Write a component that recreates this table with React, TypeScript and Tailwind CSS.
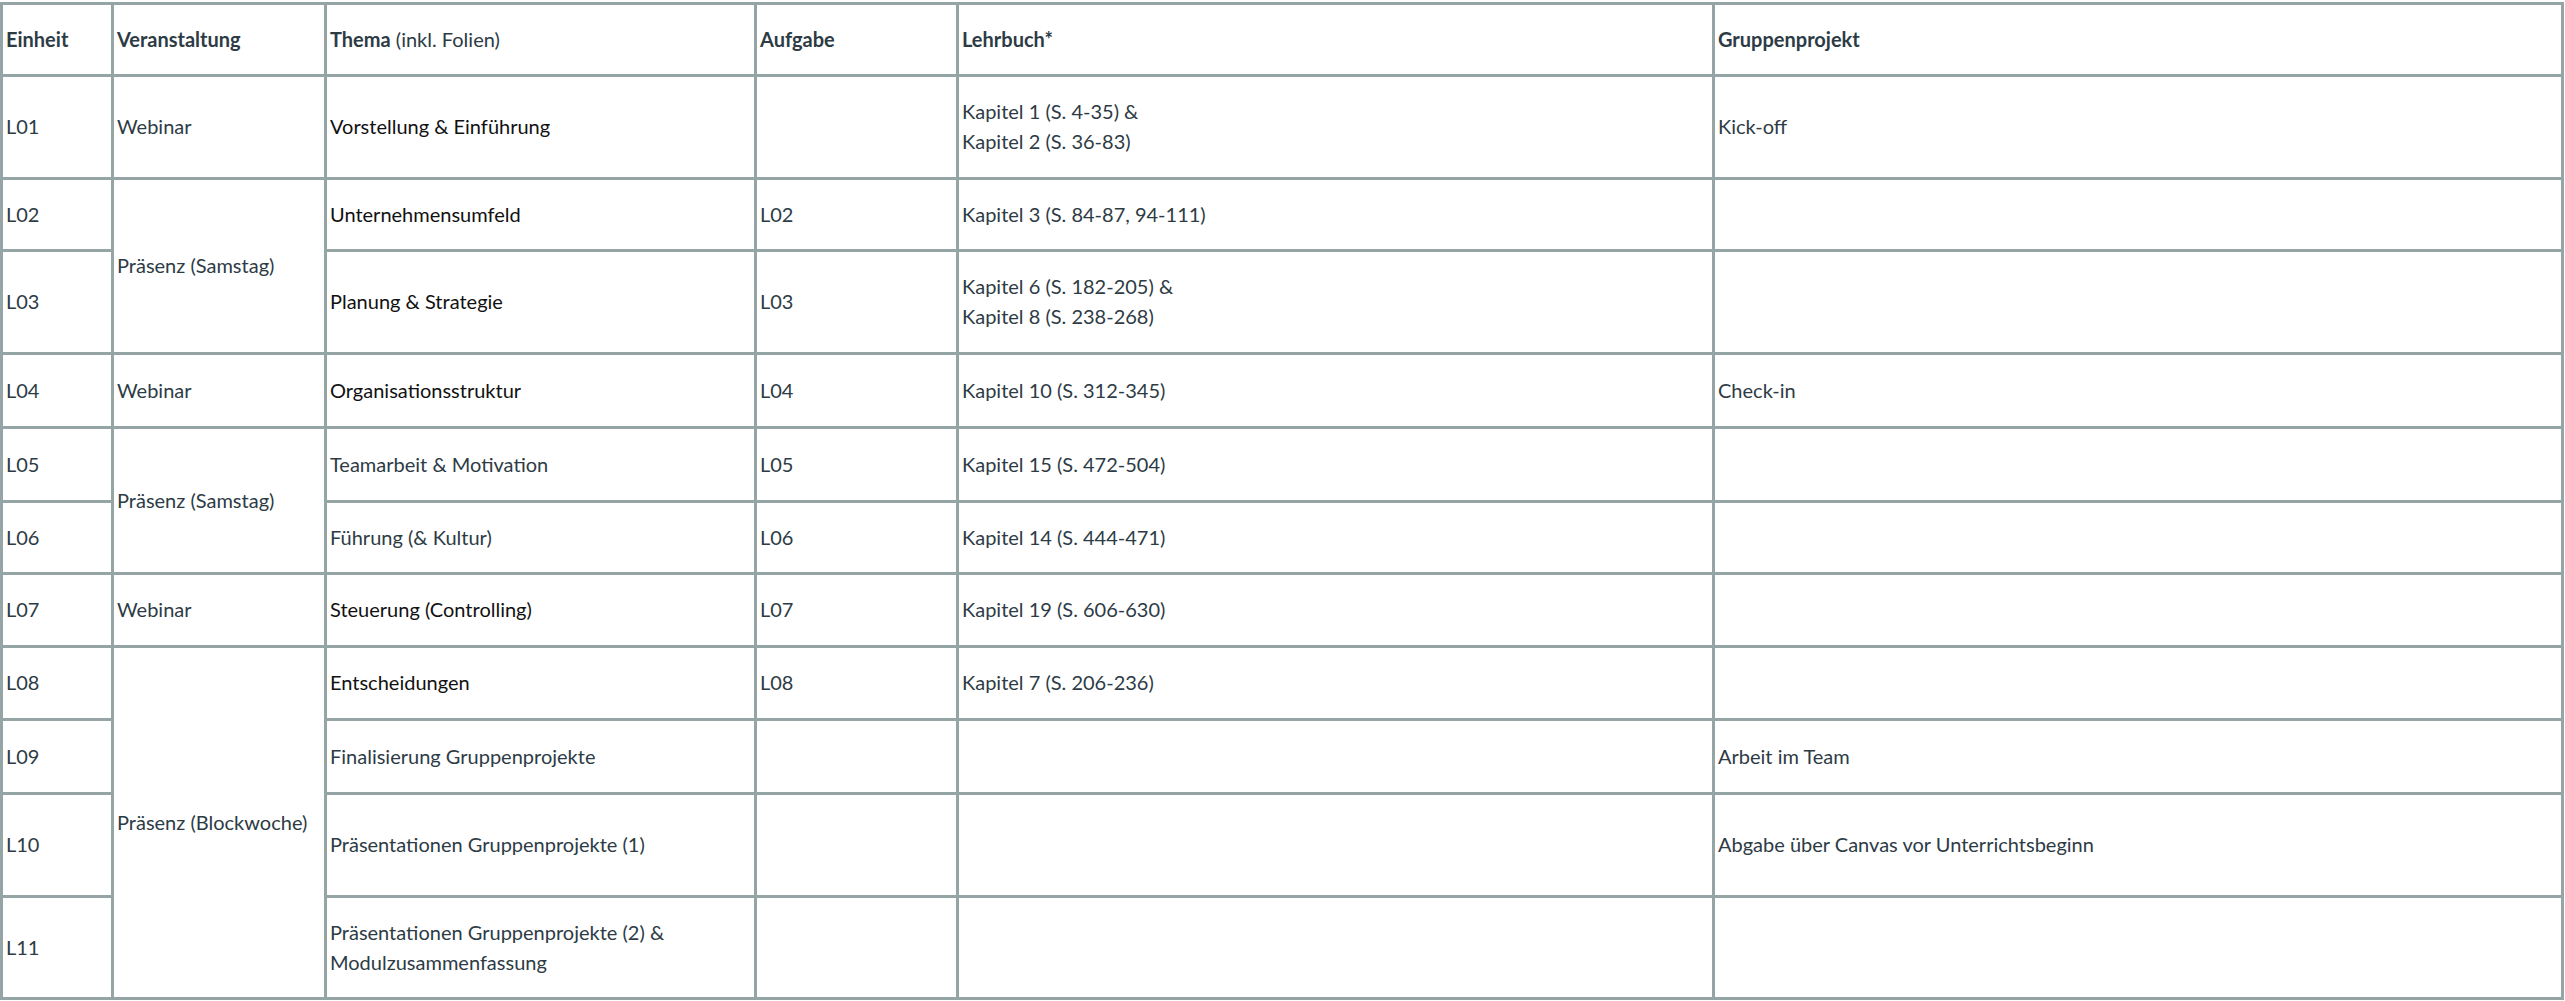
import React from "react";

const base =
  "flex items-center border-l-[3px] border-t-[3px] border-[#95a5a6] px-[3px] leading-[29.6px]";

function C({ children, cls = "", dark = false, bold = false }: { children?: React.ReactNode; cls?: string; dark?: boolean; bold?: boolean }) {
  return (
    <div className={`${base} ${cls} ${dark ? "text-[#111111]" : "text-[#2d3b45]"} ${bold ? "font-bold" : "font-normal"}`}>
      <div>{children}</div>
    </div>
  );
}

export default function App() {
  return (
    <div className="w-[2565px] h-[1001px] bg-white pt-[2px]" style={{ fontFamily: "Lato, 'Noto Sans', sans-serif" }}>
      <div className="grid grid-cols-[111px_213px_430px_202px_756px_849px] grid-rows-[72px_103px_72px_103px_74px_74px_72px_73px_73px_74px_103px_102px] w-[2564px] border-r-[3px] border-b-[3px] border-[#95a5a6] text-[20px]">
        {/* header */}
        <C bold cls="text-[#1f2a33]">Einheit</C>
        <C bold cls="text-[#1f2a33]">Veranstaltung</C>
        <C>
          <span className="font-bold">Thema</span> (inkl. Folien)
        </C>
        <C bold>Aufgabe</C>
        <C bold>Lehrbuch*</C>
        <C bold>Gruppenprojekt</C>

        {/* L01 */}
        <C>L01</C>
        <C>Webinar</C>
        <C dark>Vorstellung &amp; Einführung</C>
        <C></C>
        <C>
          Kapitel 1 (S. 4-35) &amp;
          <br />
          Kapitel 2 (S. 36-83)
        </C>
        <C>Kick-off</C>

        {/* L02 */}
        <C>L02</C>
        <C cls="row-span-2">Präsenz (Samstag)</C>
        <C dark>Unternehmensumfeld</C>
        <C>L02</C>
        <C>Kapitel 3 (S. 84-87, 94-111)</C>
        <C></C>

        {/* L03 */}
        <C>L03</C>
        <C dark>Planung &amp; Strategie</C>
        <C>L03</C>
        <C>
          Kapitel 6 (S. 182-205) &amp;
          <br />
          Kapitel 8 (S. 238-268)
        </C>
        <C></C>

        {/* L04 */}
        <C>L04</C>
        <C>Webinar</C>
        <C dark>Organisationsstruktur</C>
        <C>L04</C>
        <C>Kapitel 10 (S. 312-345)</C>
        <C>Check-in</C>

        {/* L05 */}
        <C>L05</C>
        <C cls="row-span-2">Präsenz (Samstag)</C>
        <C>Teamarbeit &amp; Motivation</C>
        <C>L05</C>
        <C>Kapitel 15 (S. 472-504)</C>
        <C></C>

        {/* L06 */}
        <C>L06</C>
        <C>Führung (&amp; Kultur)</C>
        <C>L06</C>
        <C>Kapitel 14 (S. 444-471)</C>
        <C></C>

        {/* L07 */}
        <C>L07</C>
        <C>Webinar</C>
        <C dark>Steuerung (Controlling)</C>
        <C>L07</C>
        <C>Kapitel 19 (S. 606-630)</C>
        <C></C>

        {/* L08 */}
        <C>L08</C>
        <C cls="row-span-4">Präsenz (Blockwoche)</C>
        <C dark>Entscheidungen</C>
        <C>L08</C>
        <C>Kapitel 7 (S. 206-236)</C>
        <C></C>

        {/* L09 */}
        <C>L09</C>
        <C>Finalisierung Gruppenprojekte</C>
        <C></C>
        <C></C>
        <C>Arbeit im Team</C>

        {/* L10 */}
        <C>L10</C>
        <C>Präsentationen Gruppenprojekte (1)</C>
        <C></C>
        <C></C>
        <C>Abgabe über Canvas vor Unterrichtsbeginn</C>

        {/* L11 */}
        <C>L11</C>
        <C>
          Präsentationen Gruppenprojekte (2) &amp;
          <br />
          Modulzusammenfassung
        </C>
        <C></C>
        <C></C>
        <C></C>
      </div>
    </div>
  );
}
